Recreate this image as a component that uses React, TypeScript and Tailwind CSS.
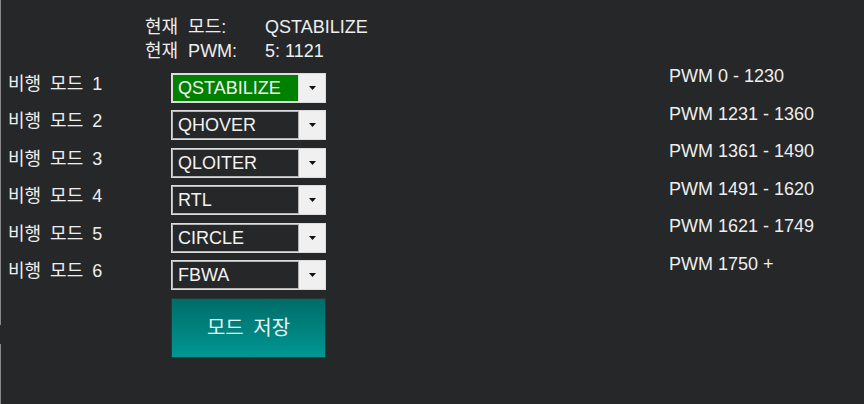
import React from 'react';

const MODES = ['QSTABILIZE', 'QHOVER', 'QLOITER', 'RTL', 'CIRCLE', 'FBWA'];
const RANGES = ['PWM 0 - 1230', 'PWM 1231 - 1360', 'PWM 1361 - 1490', 'PWM 1491 - 1620', 'PWM 1621 - 1749', 'PWM 1750 +'];

const font = "font-['Liberation_Sans','Noto_Sans_CJK_KR',sans-serif]";

const ModeSelect: React.FC<{ value: string; active?: boolean }> = ({ value, active }) => (
    <div className="flex h-[30px] w-[155px] border border-[#dcdcdc] bg-[#dcdcdc]">
        <div className={`flex flex-1 items-center pl-[5px] text-[18px] leading-none text-[#f2f2f2] ${active ? 'bg-[#008000] border border-[#dcdcdc]' : 'bg-[#262729] border border-[#b4b4b4]'}`}>
            {value}
        </div>
        <div className="flex w-[26px] items-center justify-center bg-[#f0f0f0]">
            <svg width="7" height="4" viewBox="0 0 7 4">
                <path d="M0 0 H7 L3.5 4 Z" fill="#111" />
            </svg>
        </div>
    </div>
);

export default function App() {
    return (
        <div className={`relative h-[404px] w-[864px] overflow-hidden bg-[#262729] text-[#eeeeee] ${font}`}>
            {/* left edge line */}
            <div className="absolute left-0 top-0 h-[325px] w-px bg-[#8a8a8a]" />
            <div className="absolute left-0 top-[344px] h-[60px] w-px bg-[#8a8a8a]" />

            <div className="flex">
                {/* labels + selects */}
                <div className="flex w-[640px] flex-col">
                    <div className="ml-[145px] mt-[17px] grid grid-cols-[120px_auto] gap-y-[3px] text-[18px] leading-[21px]">
                        <span className="[word-spacing:5px]">현재 모드:</span>
                        <span>QSTABILIZE</span>
                        <span className="[word-spacing:5px]">현재 PWM:</span>
                        <span>5: 1121</span>
                    </div>

                    <div className="mt-[11px] flex flex-col gap-[7.4px]">
                        {MODES.map((m, i) => (
                            <div key={m} className="flex items-start">
                                <span className="w-[171px] pl-[8px] pt-[2px] text-[18px] leading-[18px] [word-spacing:4px]">비행 모드 {i + 1}</span>
                                <ModeSelect value={m} active={i === 0} />
                            </div>
                        ))}
                    </div>

                    <button className="ml-[171px] mt-[8px] flex h-[60px] w-[155px] items-center justify-center border border-[#1e3c3a] bg-gradient-to-b from-[#006c68] to-[#009793] text-[20px] text-[#e8f4f3] [word-spacing:4px]">
                        모드 저장
                    </button>
                </div>

                {/* PWM ranges */}
                <div className="ml-[29px] mt-[65px] flex flex-col gap-[15.5px] text-[18px] leading-[22px]">
                    {RANGES.map((r) => (
                        <span key={r}>{r}</span>
                    ))}
                </div>
            </div>
        </div>
    );
}
